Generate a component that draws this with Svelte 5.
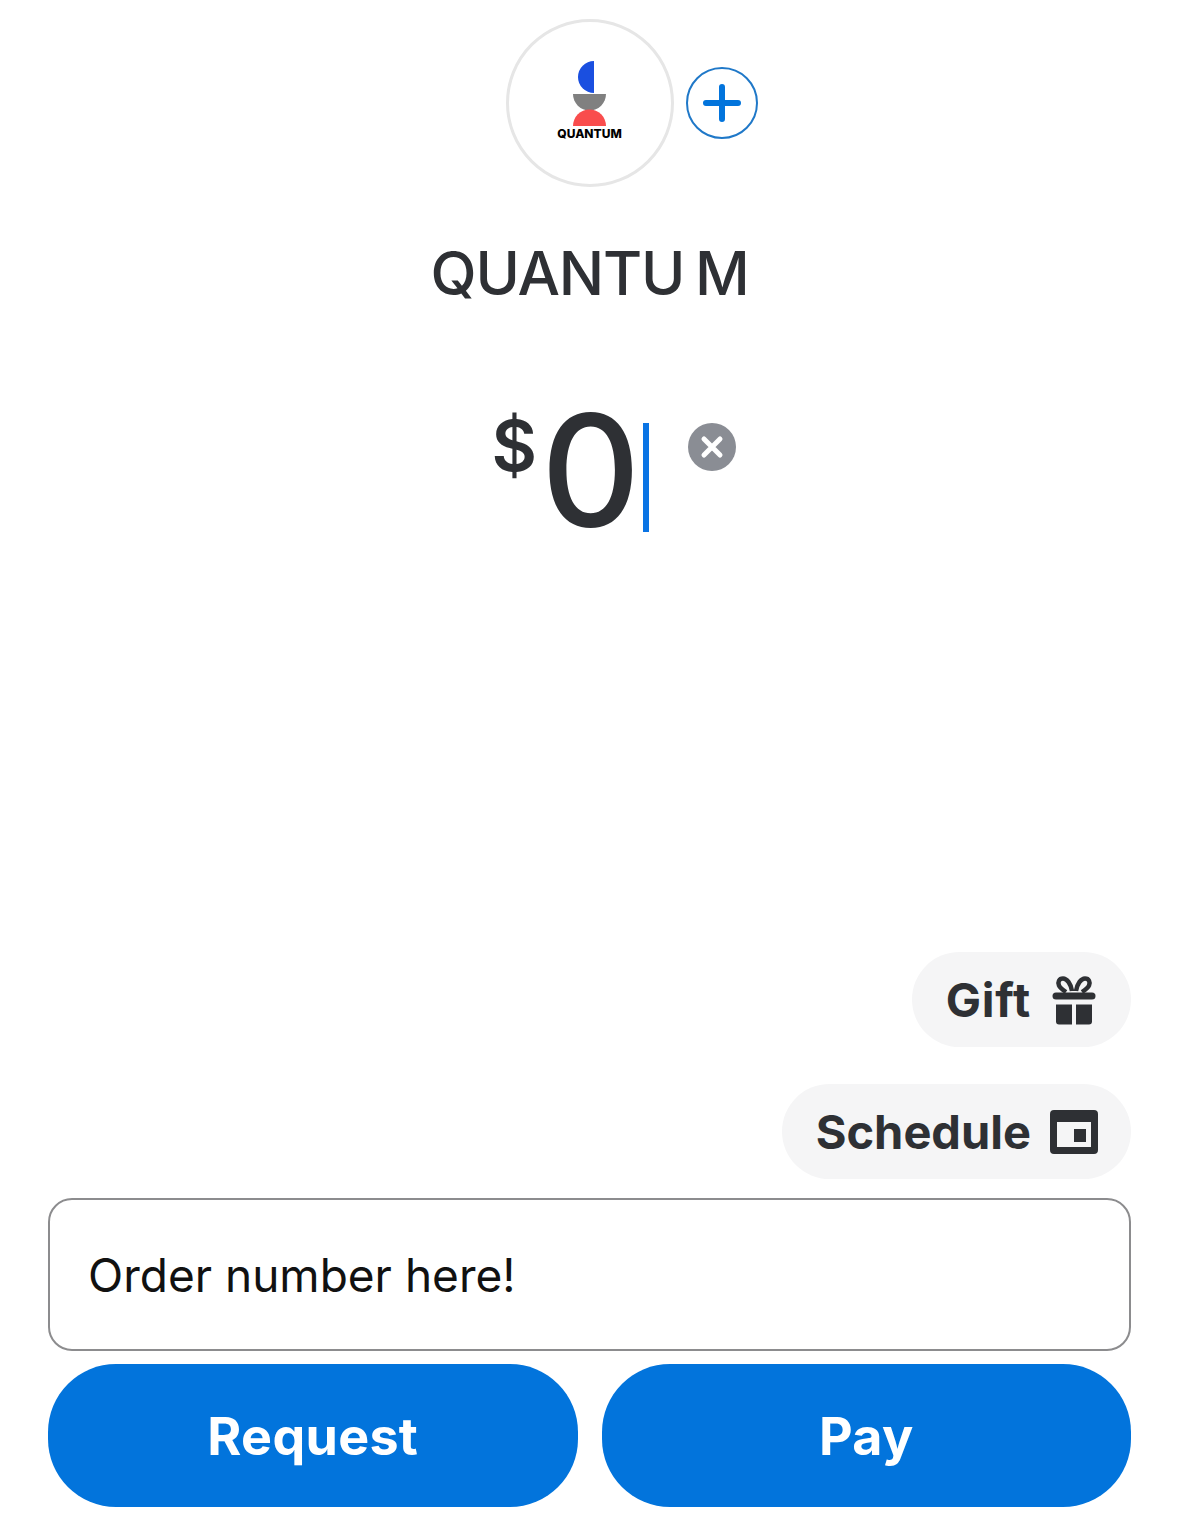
<script>
    let note = 'Order number here!';
</script>

<div class="screen">
    <div class="recipient">
        <div class="avatar">
            <svg class="logo" viewBox="0 0 66 82" width="66" height="82" aria-hidden="true">
                <path d="M21 0 A16 16 0 0 0 21 32 Z" fill="#1a4fe0" />
                <path d="M0 33 H33 A16.5 16.5 0 0 1 0 33 Z" fill="#808080" />
                <path d="M0 65 A16.5 16.5 0 0 1 33 65 Z" fill="#f94d4d" />
            </svg>
            <span class="logo-text">QUANTUM</span>
        </div>
        <button class="add" aria-label="Add recipient">
            <svg viewBox="0 0 72 72" width="72" height="72">
                <circle cx="36" cy="36" r="35" fill="none" stroke="#1f78c8" stroke-width="2" />
                <path d="M36 20 V52 M20 36 H52" stroke="#0274dc" stroke-width="6" stroke-linecap="round" fill="none" />
            </svg>
        </button>
    </div>

    <h1 class="name">QUANTU M</h1>

    <div class="amount">
        <span class="currency">$</span>
        <span class="value">0</span>
        <span class="caret"></span>
        <button class="clear" aria-label="Clear amount">
            <svg viewBox="0 0 48 48" width="48" height="48">
                <circle cx="24" cy="24" r="24" fill="#8a8d94" />
                <path d="M16 16 L32 32 M32 16 L16 32" stroke="#fff" stroke-width="5" stroke-linecap="round" />
            </svg>
        </button>
    </div>

    <div class="options">
        <button class="pill gift">
            Gift
            <svg viewBox="-2 0 48 50" width="48" height="50" aria-hidden="true">
                <path d="M20 16 C19 9 15 3.500 11 3.500 C7 3.500 5.500 7 7 10.500 C8 13 11 15 14 17 M24 16 C25 9 29 3.500 33 3.500 C37 3.500 38.500 7 37 10.500 C36 13 33 15 30 17" fill="none" stroke="#2e3034" stroke-width="4.500" />
                <path d="M4 17.500 H40 A3.500 3.500 0 0 1 40 24.500 H4 A3.500 3.500 0 0 1 4 17.500 Z" fill="#2e3034" />
                <path d="M4 29.500 H20 V49.500 H7 A3 3 0 0 1 4 46.500 Z M24 29.500 H40 V46.500 A3 3 0 0 1 37 49.500 H24 Z" fill="#2e3034" />
            </svg>
        </button>
        <button class="pill">
            Schedule
            <svg viewBox="0 0 48 44" width="48" height="44" aria-hidden="true">
                <path fill-rule="evenodd" d="M4 0 H44 A4 4 0 0 1 48 4 V40 A4 4 0 0 1 44 44 H4 A4 4 0 0 1 0 40 V4 A4 4 0 0 1 4 0 Z M7 12 V37 H41 V12 Z" fill="#2e3034" />
                <rect x="24" y="19" width="12" height="13" fill="#2e3034" />
            </svg>
        </button>
    </div>

    <input class="note" type="text" bind:value={note} />

    <div class="actions">
        <button class="primary">Request</button>
        <button class="primary">Pay</button>
    </div>
</div>

<style>
    :global(body) {
        background: #fff;
        font-family: Inter, "Liberation Sans", sans-serif;
    }

    .screen {
        height: 1519px;
        box-sizing: border-box;
        padding: 19px 48px 12px 48px;
        display: flex;
        flex-direction: column;
        color: #2e3034;
    }

    button {
        border: none;
        background: none;
        padding: 0;
        font-family: inherit;
    }

    .recipient {
        display: grid;
        grid-template-columns: 1fr auto 1fr;
        align-items: center;
    }

    .avatar {
        grid-column: 2;
        position: relative;
        width: 168px;
        height: 168px;
        box-sizing: border-box;
        border: 3px solid #e6e6e6;
        border-radius: 50%;
    }

    .logo {
        position: absolute;
        left: 64px;
        top: 39px;
    }

    .logo-text {
        position: absolute;
        left: 0;
        right: 0;
        top: 104px;
        text-align: center;
        font-size: 12px;
        line-height: 16px;
        font-weight: 800;
        color: #000;
    }

    .add {
        justify-self: start;
        width: 72px;
        height: 72px;
        margin-left: 12px;
        margin-top: -1px;
        display: flex;
    }

    .name {
        margin: 47px 0 0;
        text-align: center;
        font-size: 60px;
        line-height: 78px;
        font-weight: 500;
        letter-spacing: -1.200px;
        word-spacing: -4px;
    }

    .amount {
        margin-top: 85px;
        display: flex;
        justify-content: center;
        height: 160px;
        padding-left: 49px;
    }

    .currency {
        font-size: 70px;
        line-height: 88px;
        font-weight: 600;
        margin-top: 5px;
        margin-right: 4px;
    }

    .value {
        font-size: 154px;
        line-height: 160px;
        font-weight: 500;
        letter-spacing: -2px;
        margin-top: -7px;
    }

    .caret {
        width: 6px;
        height: 109px;
        margin: 26px 0 0 5px;
        background: #0a74e4;
    }

    .clear {
        width: 48px;
        height: 48px;
        margin: 26px 0 0 39px;
        display: flex;
    }

    .options {
        margin-top: auto;
        display: flex;
        flex-direction: column;
        align-items: flex-end;
        gap: 37px;
    }

    .pill {
        height: 95px;
        display: flex;
        align-items: center;
        gap: 19px;
        padding: 0 33px 0 34px;
        border-radius: 48px;
        background: #f5f5f6;
        color: #2e3034;
        font-size: 47px;
        font-weight: 700;
    }

    .gift {
        letter-spacing: 0.800px;
    }

    .note {
        display: block;
        width: 100%;
        height: 153px;
        margin-top: 19px;
        box-sizing: border-box;
        padding: 0 38px;
        border: 2px solid #8c8c8e;
        border-radius: 24px;
        background: #fff;
        color: #111;
        font-family: Inter, "Liberation Sans", sans-serif;
        font-size: 46px;
        outline: none;
    }

    .actions {
        margin-top: 13px;
        display: flex;
        gap: 24px;
    }

    .primary {
        flex: 1;
        height: 143px;
        padding-top: 1px;
        border-radius: 68px;
        background: #0274dc;
        color: #fff;
        font-size: 52px;
        font-weight: 700;
        letter-spacing: 0.300px;
    }
</style>
